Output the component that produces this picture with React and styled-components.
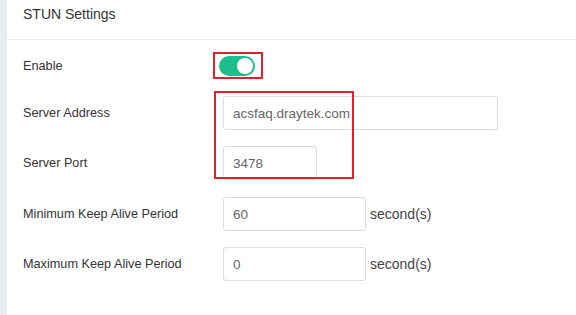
import React from 'react';
import styled, { createGlobalStyle } from 'styled-components';

const GlobalStyle = createGlobalStyle`
    html, body {
        margin:0;
        padding:0;
        background:#fff;
    }
    body {
        font-family:"Liberation Sans", Arial, sans-serif;
    }
`;

const Page = styled.div`
    display:flex;
    width:576px;
    height:315px;
    overflow:hidden;
    background:#fff;
`;

const SideStrip = styled.div`
    width:7px;
    flex-shrink:0;
    background:#ececf5;
`;

const Panel = styled.div`
    flex:1;
    display:flex;
    flex-direction:column;
`;

const PanelHeader = styled.div`
    height:40px;
    display:flex;
    align-items:center;
    padding:0 16px 12px;
    box-sizing:border-box;
    border-bottom:1px solid #ececec;
    font-size:14px;
    color:#333;
`;

const Form = styled.div`
    position:relative;
    display:flex;
    flex-direction:column;
    padding:10px 16px 0;
`;

const Row = styled.div`
    display:flex;
    align-items:center;
    height:${p => p.$h || 34}px;
    margin-top:${p => p.$mt || 0}px;
`;

const Label = styled.div`
    width:200px;
    flex-shrink:0;
    font-size:12.7px;
    color:#333;
`;

const ToggleCell = styled.div`
    position:relative;
    margin-left:-4px;
    display:flex;
    align-items:center;
`;

const Switch = styled.div`
    width:36px;
    height:20px;
    border-radius:10px;
    background:#1cbf8b;
    position:relative;

    &::after {
        content:'';
        position:absolute;
        top:2px;
        right:2px;
        width:16px;
        height:16px;
        border-radius:50%;
        background:#fff;
    }
`;

const Input = styled.input`
    width:${p => p.$w}px;
    height:34px;
    box-sizing:border-box;
    border:1px solid #dcdcdc;
    border-radius:3px;
    padding:0 9px;
    font-family:"Liberation Sans", Arial, sans-serif;
    font-size:13.5px;
    color:#666;
    background:#fff;
    outline:none;
`;

const Unit = styled.span`
    margin-left:4px;
    font-size:14px;
    color:#444;
`;

const Highlight = styled.div`
    position:absolute;
    border:2px solid #e3202d;
    box-sizing:border-box;
    pointer-events:none;
`;

const ToggleHighlight = styled(Highlight)`
    top:-4px;
    left:-6px;
    width:50px;
    height:27px;
`;

const ServerHighlight = styled(Highlight)`
    left:207px;
    top:51px;
    width:140px;
    height:88px;
`;

function App () {
    return (
        <Page>
            <GlobalStyle />
            <SideStrip />
            <Panel>
                <PanelHeader>STUN Settings</PanelHeader>
                <Form>
                    <Row $h={32}>
                        <Label>Enable</Label>
                        <ToggleCell>
                            <Switch />
                            <ToggleHighlight />
                        </ToggleCell>
                    </Row>
                    <Row $mt={14}>
                        <Label>Server Address</Label>
                        <Input $w={275} defaultValue="acsfaq.draytek.com" />
                    </Row>
                    <Row $mt={16}>
                        <Label>Server Port</Label>
                        <Input $w={94} defaultValue="3478" />
                    </Row>
                    <Row $mt={17}>
                        <Label>Minimum Keep Alive Period</Label>
                        <Input $w={143} defaultValue="60" />
                        <Unit>second(s)</Unit>
                    </Row>
                    <Row $mt={16}>
                        <Label>Maximum Keep Alive Period</Label>
                        <Input $w={143} defaultValue="0" />
                        <Unit>second(s)</Unit>
                    </Row>
                    <ServerHighlight />
                </Form>
            </Panel>
        </Page>
    );
}

export default App;
